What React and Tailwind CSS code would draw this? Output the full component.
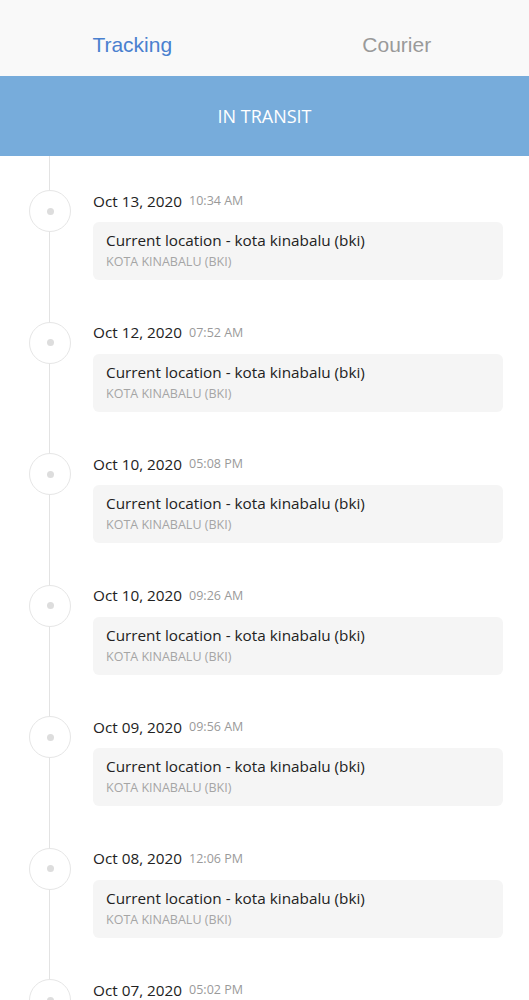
import React from "react";

const items = [
  ["Oct 13, 2020", "10:34 AM"],
  ["Oct 12, 2020", "07:52 AM"],
  ["Oct 10, 2020", "05:08 PM"],
  ["Oct 10, 2020", "09:26 AM"],
  ["Oct 09, 2020", "09:56 AM"],
  ["Oct 08, 2020", "12:06 PM"],
  ["Oct 07, 2020", "05:02 PM"],
];

export default function App() {
  return (
    <div className="w-[529px] h-[1000px] overflow-hidden bg-white" style={{ fontFamily: '"Open Sans", sans-serif' }}>
      <div className="h-[76px] bg-[#f9f9f9] flex items-center pt-[14px]" style={{ fontFamily: '"Liberation Sans", Arial, sans-serif' }}>
        <div className="flex-1 text-center text-[21px] text-[#4a80cf]">Tracking</div>
        <div className="flex-1 text-center text-[21px] text-[#9a9a9a]">Courier</div>
      </div>
      <div className="h-[80px] bg-[#77acdb] flex items-center justify-center text-white text-[18px]">
        IN TRANSIT
      </div>
      <div className="relative">
        <div className="absolute left-[49px] top-0 bottom-0 w-px bg-[#e3e3e3]" />
        {items.map(([d, t], i) => (
          <div key={i} className="relative flex pt-[33px] pb-[7.5px]">
            <div className="w-[93px] shrink-0">
              <div className="ml-[29px] mt-[1px] w-[42px] h-[42px] rounded-full border border-[#e6e6e6] bg-white flex items-center justify-center">
                <div className="w-[7px] h-[7px] rounded-full bg-[#dddddd]" />
              </div>
            </div>
            <div className="flex-1 pr-[26px]">
              <div className="h-[24px] flex items-center gap-[7px]">
                <span className="text-[15.3px] text-[#222]">{d}</span>
                <span className="text-[12.5px] text-[#9a9a9a] mt-[1px]">{t}</span>
              </div>
              <div className="mt-[9px] rounded-[6px] bg-[#f5f5f5] pl-[13px] pt-[7px] pb-[10px]">
                <div className="text-[15.3px] leading-[22px] text-[#222]">Current location - kota kinabalu (bki)</div>
                <div className="mt-[3px] text-[12.5px] leading-[16px] text-[#a5a5a5]">KOTA KINABALU (BKI)</div>
              </div>
            </div>
          </div>
        ))}
      </div>
    </div>
  );
}
